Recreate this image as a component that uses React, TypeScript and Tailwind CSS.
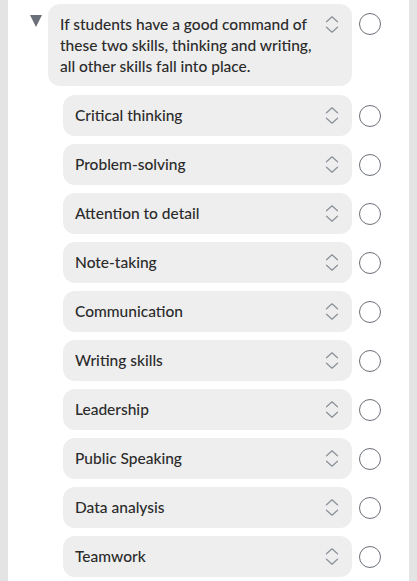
const skills = [
  'Critical thinking',
  'Problem-solving',
  'Attention to detail',
  'Note-taking',
  'Communication',
  'Writing skills',
  'Leadership',
  'Public Speaking',
  'Data analysis',
  'Teamwork',
];

const UpDown = () => (
  <svg width="14" height="19" viewBox="0 0 14 19" fill="none" stroke="#8b9099" strokeWidth="1.2" strokeLinecap="round" strokeLinejoin="round">
    <path d="M1.5 6.8 7 1.8 12.5 6.8" />
    <path d="M1.5 12.2 7 17.2 12.5 12.2" />
  </svg>
);

const Radio = () => (
  <div className="h-[22px] w-[22px] shrink-0 rounded-full border-[1.5px] border-[#6b7078]" />
);

const Row = ({ label }: { label: string }) => (
  <div className="flex items-center">
    <div className="flex h-[41px] w-[289px] items-center justify-between rounded-xl bg-[#eeeeee] pl-3 pr-[13px]">
      <span className="text-[15.5px] font-medium text-[#2b2b2b]">{label}</span>
      <UpDown />
    </div>
    <div className="ml-[7px]">
      <Radio />
    </div>
  </div>
);

export default function App() {
  return (
    <div className="flex min-h-[581px] w-[417px] bg-[#e4e4e4] px-2" style={{ fontFamily: 'Lato, "Noto Sans", sans-serif' }}>
      <div className="flex-1 bg-white pt-1 pb-1">
        <div className="flex items-start">
          <div className="ml-[22px] mt-[11px] h-0 w-0 border-x-[6px] border-t-[12px] border-x-transparent border-t-[#6b7078]" />
          <div className="ml-[6px] flex w-[304px] items-start justify-between rounded-xl bg-[#eeeeee] pb-[9px] pl-3 pr-[13px] pt-[10px]">
            <p className="text-[15.5px] font-medium leading-[21px] text-[#2b2b2b]">
              If students have a good command of
              <br />
              these two skills, thinking and writing,
              <br />
              all other skills fall into place.
            </p>
            <div className="mt-[1px]">
              <UpDown />
            </div>
          </div>
          <div className="ml-[7px] mt-[9px]">
            <Radio />
          </div>
        </div>
        <div className="ml-[55px] mt-[9px] flex flex-col gap-2">
          {skills.map(s => (
            <Row key={s} label={s} />
          ))}
        </div>
      </div>
    </div>
  );
}
